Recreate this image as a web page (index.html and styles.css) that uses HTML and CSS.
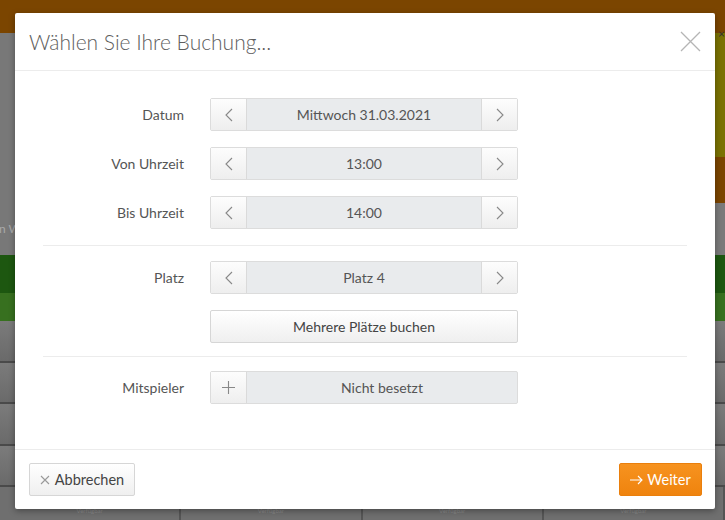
FILE: index.html
```html
<!DOCTYPE html>
<html lang="de">
<head>
<meta charset="utf-8">
<title>Buchung</title>
<link rel="stylesheet" href="styles.css">
</head>
<body>
<div class="page">
  <div class="topbar"><span class="topx">×</span></div>
  <div class="upper">
    <div class="upper-main"><span class="ghost">n Wochenansicht</span></div>
    <div class="upper-side">
      <div class="side-olive"></div>
      <div class="side-brown"></div>
      <div class="side-gray"></div>
    </div>
  </div>
  <div class="green-dark"></div>
  <div class="green-light"></div>
  <div class="trow"></div>
  <div class="trow"></div>
  <div class="trow"></div>
  <div class="trow"></div>
  <div class="trow cells">
    <div class="cell"><span>Verfügbar</span></div>
    <div class="cell"><span>Verfügbar</span></div>
    <div class="cell"><span>Verfügbar</span></div>
    <div class="cell"><span>Verfügbar</span></div>
  </div>
</div>

<div class="modal">
  <div class="modal-header">
    <h1 class="modal-title">Wählen Sie Ihre Buchung...</h1>
    <button class="close" aria-label="Schließen">
      <svg width="21" height="21" viewBox="0 0 21 21"><path d="M1 1L20 20M20 1L1 20" stroke="#b5b5b5" stroke-width="1.3" fill="none"/></svg>
    </button>
  </div>
  <div class="modal-body">
    <div class="group g1">
      <div class="row">
        <div class="label">Datum</div>
        <div class="spinner">
          <button class="sbtn"><svg width="8" height="14" viewBox="0 0 8 14"><path d="M7 1L1 7L7 13" stroke="#888" stroke-width="1.1" fill="none"/></svg></button>
          <div class="sval">Mittwoch 31.03.2021</div>
          <button class="sbtn"><svg width="8" height="14" viewBox="0 0 8 14"><path d="M1 1L7 7L1 13" stroke="#888" stroke-width="1.1" fill="none"/></svg></button>
        </div>
      </div>
      <div class="row">
        <div class="label">Von Uhrzeit</div>
        <div class="spinner">
          <button class="sbtn"><svg width="8" height="14" viewBox="0 0 8 14"><path d="M7 1L1 7L7 13" stroke="#888" stroke-width="1.1" fill="none"/></svg></button>
          <div class="sval">13:00</div>
          <button class="sbtn"><svg width="8" height="14" viewBox="0 0 8 14"><path d="M1 1L7 7L1 13" stroke="#888" stroke-width="1.1" fill="none"/></svg></button>
        </div>
      </div>
      <div class="row">
        <div class="label">Bis Uhrzeit</div>
        <div class="spinner">
          <button class="sbtn"><svg width="8" height="14" viewBox="0 0 8 14"><path d="M7 1L1 7L7 13" stroke="#888" stroke-width="1.1" fill="none"/></svg></button>
          <div class="sval">14:00</div>
          <button class="sbtn"><svg width="8" height="14" viewBox="0 0 8 14"><path d="M1 1L7 7L1 13" stroke="#888" stroke-width="1.1" fill="none"/></svg></button>
        </div>
      </div>
    </div>
    <div class="group g2">
      <div class="row">
        <div class="label">Platz</div>
        <div class="spinner">
          <button class="sbtn"><svg width="8" height="14" viewBox="0 0 8 14"><path d="M7 1L1 7L7 13" stroke="#888" stroke-width="1.1" fill="none"/></svg></button>
          <div class="sval">Platz 4</div>
          <button class="sbtn"><svg width="8" height="14" viewBox="0 0 8 14"><path d="M1 1L7 7L1 13" stroke="#888" stroke-width="1.1" fill="none"/></svg></button>
        </div>
      </div>
      <div class="row">
        <div class="label"></div>
        <button class="wide">Mehrere Plätze buchen</button>
      </div>
    </div>
    <div class="group last">
      <div class="row">
        <div class="label">Mitspieler</div>
        <div class="spinner">
          <button class="sbtn"><svg width="13" height="13" viewBox="0 0 13 13"><path d="M6.5 0V13M0 6.5H13" stroke="#888" stroke-width="1.1" fill="none"/></svg></button>
          <div class="sval">Nicht besetzt</div>
        </div>
      </div>
    </div>
  </div>
  <div class="modal-footer">
    <button class="btn-cancel"><svg width="10" height="10" viewBox="0 0 10 10"><path d="M1 1L9 9M9 1L1 9" stroke="#999" stroke-width="1.1" fill="none"/></svg>Abbrechen</button>
    <button class="btn-next"><svg width="13" height="10" viewBox="0 0 13 10"><path d="M0 5H12M8 1L12 5L8 9" stroke="#fff" stroke-width="1.1" fill="none"/></svg>Weiter</button>
  </div>
</div>
</body>
</html>
```

FILE: styles.css
```css
* { box-sizing: border-box; }
html, body { margin: 0; padding: 0; }
body {
  width: 725px;
  height: 520px;
  overflow: hidden;
  font-family: Lato, "Open Sans", "Liberation Sans", sans-serif;
  background: #777;
  position: relative;
}
.page { width: 725px; height: 520px; display: flex; flex-direction: column; }
.topbar { height: 33px; background: #7b4500; position: relative; flex: none; }
.topx { position: absolute; right: 0; top: 28px; font-size: 12px; color: #333; line-height: 1; }
.upper { height: 222px; display: flex; flex: none; }
.upper-main { flex: 1; background: #787878; padding-top: 186px; line-height: 1; }
.ghost { font-size: 12px; color: #a9a9a9; margin-left: -1px; white-space: nowrap; }
.upper-side { width: 10px; display: flex; flex-direction: column; }
.side-olive { height: 124px; background: #7a7203; }
.side-brown { height: 46px; background: #7b4500; }
.side-gray { flex: 1; background: #7a7a7a; }
.green-dark { height: 38px; background: #1d5710; flex: none; }
.green-light { height: 28px; background: #37701f; flex: none; }
.trow {
  height: 41.5px; flex: none;
  background: linear-gradient(#7b7b7b, #6a6a6a);
  border-bottom: 2px solid #4a4a4a;
}
.trow.cells { display: flex; border-bottom: none; background: #6f6f6f; flex: 1; height: auto; }
.cell { flex: 1; border-right: 2px solid #555; display: flex; align-items: flex-start; justify-content: center; padding-top: 21px; line-height: 1; }
.cell span { font-size: 6px; color: #8a8a8a; }

.modal {
  position: absolute;
  left: 15px; top: 13px;
  width: 700px; height: 496px;
  background: #fff;
  border-radius: 2px;
  box-shadow: 0 2px 6px rgba(0,0,0,0.35);
  display: flex; flex-direction: column;
}
.modal-header {
  height: 58px; flex: none;
  border-bottom: 1px solid #ececec;
  display: flex; align-items: center; justify-content: space-between;
  padding: 0 14px 0 14px;
}
.modal-title {
  margin: 0; font-weight: 300; font-size: 21px; color: #5e5e5e; letter-spacing: 0;
}
.close { border: 0; background: none; padding: 0; width: 21px; height: 21px; display: flex; margin-top: 0; }
.modal-body { flex: 1; padding: 27px 28px 0 28px; }
.group { border-bottom: 1px solid #ececec; display: flex; flex-direction: column; }
.g1 { gap: 16px; padding-bottom: 16px; margin-bottom: 15px; }
.g2 { gap: 16px; padding-bottom: 13px; margin-bottom: 14px; }
.group.last { border-bottom: 0; }
.row { display: flex; align-items: center; gap: 26px; height: 33px; }
.label { width: 141px; text-align: right; font-size: 14px; color: #555; }
.spinner {
  width: 308px; height: 33px; display: flex;
  border: 1px solid #dcdcdc; border-radius: 2px; background: #e9ebed;
}
.sbtn {
  width: 36px; flex: none; border: 0; padding: 0;
  background: linear-gradient(#fdfdfd, #eeeeee);
  display: flex; align-items: center; justify-content: center;
}
.sbtn:first-child { border-right: 1px solid #dadada; }
.sbtn:last-child { border-left: 1px solid #dadada; }
.sval { flex: 1; display: flex; align-items: center; justify-content: center; font-size: 14px; color: #555; }
.wide {
  width: 308px; height: 33px; padding: 0;
  border: 1px solid #d6d6d6; border-radius: 2px;
  background: linear-gradient(#ffffff, #efefef);
  font-family: inherit; font-size: 14px; color: #444;
}
.modal-footer {
  height: 60px; flex: none;
  border-top: 1px solid #ececec;
  display: flex; align-items: center; justify-content: space-between;
  padding: 0 13px 0 14px;
}
.btn-cancel {
  height: 33px; width: 106px; padding: 0;
  border: 1px solid #d6d6d6; border-radius: 2px;
  background: linear-gradient(#ffffff, #efefef);
  font-family: inherit; font-size: 14.5px; color: #444;
  display: flex; align-items: center; justify-content: center; gap: 5px;
}
.btn-next {
  height: 33px; width: 83px; padding: 0;
  border: 1px solid #ea7f0c; border-radius: 2px;
  background: linear-gradient(#f7931f, #ef830e);
  font-family: inherit; font-size: 14.5px; color: #fff;
  display: flex; align-items: center; justify-content: center; gap: 4px;
}
```
